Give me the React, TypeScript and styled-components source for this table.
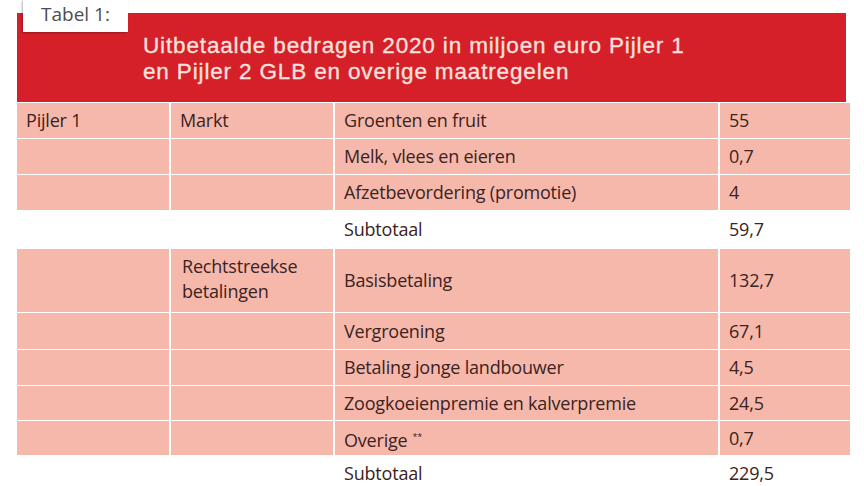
import styled, { createGlobalStyle } from "styled-components";

const GlobalStyle = createGlobalStyle`
  html, body {
    margin: 0;
    padding: 0;
    background: #ffffff;
  }
  body {
    font-family: "Open Sans", "Noto Sans", sans-serif;
  }
`;

const Page = styled.div`
  position: relative;
  width: 864px;
  height: 486px;
  overflow: hidden;
  padding: 13px 0 0 17px;
  box-sizing: border-box;
`;

const Tab = styled.div`
  position: absolute;
  left: 23px;
  top: 0;
  width: 105px;
  height: 32px;
  background: #ffffff;
  box-shadow: -1px 1px 2px rgba(0, 0, 0, 0.3);
  color: #4d4d4d;
  font-size: 19px;
  line-height: 24px;
  padding: 2px 0 0 18px;
  box-sizing: border-box;
  z-index: 2;
`;

const Header = styled.div`
  width: 829px;
  height: 89px;
  background: #d62029;
  box-sizing: border-box;
  padding: 20px 0 0 126px;
  display: flex;
  flex-direction: column;
`;

const TitleLine = styled.div`
  height: 26px;
  color: #fbe2df;
  font-family: "Liberation Sans", Arial, sans-serif;
  font-size: 22.5px;
  line-height: 26px;
  letter-spacing: 0.85px;
  -webkit-text-stroke: 0.3px #fbe2df;
  white-space: nowrap;
`;

const Grid = styled.div`
  display: grid;
  grid-template-columns: 152px 162px 383px 130px;
  column-gap: 2px;
  row-gap: 1px;
  width: 831px;
  padding-top: 1px;
`;

const Cell = styled.div<{ $fill?: boolean; $h: number; $top?: boolean }>`
  background: ${(p) => (p.$fill ? "#f7b8ac" : "#ffffff")};
  height: ${(p) => p.$h}px;
  display: flex;
  align-items: ${(p) => (p.$top ? "flex-start" : "center")};
  padding: ${(p) => (p.$top ? "5px 10px 0 11px" : "0 10px 0 9px")};
  box-sizing: border-box;
  color: #3a2321;
  font-size: 18px;
  font-weight: 500;
  line-height: 25px;
  letter-spacing: -0.2px;
`;

const Sup = styled.sup`
  font-size: 9px;
  margin-left: 5px;
  vertical-align: 7px;
`;

type Row = {
  a?: string;
  b?: string;
  c: React.ReactNode;
  d: string;
  sub?: boolean;
  h: number;
};

const rows: Row[] = [
  { a: "Pijler 1", b: "Markt", c: "Groenten en fruit", d: "55", h: 35 },
  { c: "Melk, vlees en eieren", d: "0,7", h: 35 },
  { c: "Afzetbevordering (promotie)", d: "4", h: 35 },
  { c: "Subtotaal", d: "59,7", sub: true, h: 37 },
  { b: "Rechtstreekse betalingen", c: "Basisbetaling", d: "132,7", h: 63 },
  { c: "Vergroening", d: "67,1", h: 36 },
  { c: "Betaling jonge landbouwer", d: "4,5", h: 35 },
  { c: "Zoogkoeienpremie en kalverpremie", d: "24,5", h: 34 },
  {
    c: (
      <span>
        Overige<Sup>**</Sup>
      </span>
    ),
    d: "0,7",
    h: 34,
  },
  { c: "Subtotaal", d: "229,5", sub: true, h: 34 },
];

export default function App() {
  return (
    <>
      <GlobalStyle />
      <Page>
        <Tab>Tabel 1:</Tab>
        <Header>
          <TitleLine>Uitbetaalde bedragen 2020 in miljoen euro Pijler 1</TitleLine>
          <TitleLine>en Pijler 2 GLB en overige maatregelen</TitleLine>
        </Header>
        <Grid>
          {rows.map((r, i) => (
            <>
              <Cell key={`a${i}`} $fill={!r.sub} $h={r.h}>
                {r.a}
              </Cell>
              <Cell key={`b${i}`} $fill={!r.sub} $h={r.h} $top={r.h > 50}>
                {r.b}
              </Cell>
              <Cell key={`c${i}`} $fill={!r.sub} $h={r.h}>
                {r.c}
              </Cell>
              <Cell key={`d${i}`} $fill={!r.sub} $h={r.h}>
                {r.d}
              </Cell>
            </>
          ))}
        </Grid>
      </Page>
    </>
  );
}
